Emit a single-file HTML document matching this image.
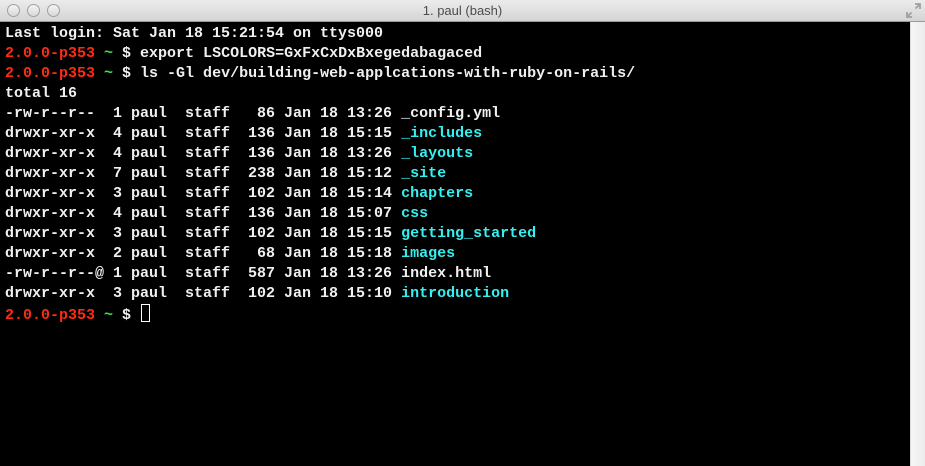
<!DOCTYPE html>
<html><head><style>
html,body{margin:0;padding:0;width:925px;height:466px;overflow:hidden;background:#000}
.tb{position:absolute;left:0;top:0;width:925px;height:22px;background:linear-gradient(#ececec,#d4d4d4);border-bottom:1px solid #9a9a9a;box-sizing:border-box}
.dot{position:absolute;top:4px;width:13px;height:13px;border-radius:50%;background:linear-gradient(#f4f4f4,#d8d8d8);border:1px solid #a0a0a0;box-sizing:border-box}
.title{position:absolute;left:0;right:0;top:3px;text-align:center;font:13px "Liberation Sans",sans-serif;color:#4d4d4d}
.term{position:absolute;left:0;top:22px;width:910px;height:444px;background:#000}
.sb{position:absolute;left:910px;top:22px;width:15px;height:444px;background:linear-gradient(90deg,#f6f6f6,#ececec);border-left:1px solid #ddd;box-sizing:border-box}
pre{margin:0;position:absolute;left:5px;top:2px;font:bold 15px/20px "Liberation Mono",monospace;color:#f0f0f0}
.r{color:#ff2a12}.g{color:#33e633}.c{color:#35f0f0}
.cur{display:inline-block;width:7px;height:16px;border:1px solid #fff;vertical-align:-3px;margin-left:1px}
</style></head><body>
<div class="tb">
<div class="dot" style="left:7px"></div><div class="dot" style="left:27px"></div><div class="dot" style="left:47px"></div>
<div class="title">1. paul (bash)</div>
<svg style="position:absolute;left:906px;top:3px" width="15" height="15" viewBox="0 0 15 15"><path d="M9 1h5v5M14 1L9.5 5.5M6 14H1V9M1 14l4.5-4.5" stroke="#a0a0a0" stroke-width="1.8" fill="none"/></svg>
</div>
<div class="term"><pre>Last login: Sat Jan 18 15:21:54 on ttys000
<span class="r">2.0.0-p353</span> <span class="g">~</span> $ export LSCOLORS=GxFxCxDxBxegedabagaced
<span class="r">2.0.0-p353</span> <span class="g">~</span> $ ls -Gl dev/building-web-applcations-with-ruby-on-rails/
total 16
-rw-r--r--  1 paul  staff   86 Jan 18 13:26 _config.yml
drwxr-xr-x  4 paul  staff  136 Jan 18 15:15 <span class="c">_includes</span>
drwxr-xr-x  4 paul  staff  136 Jan 18 13:26 <span class="c">_layouts</span>
drwxr-xr-x  7 paul  staff  238 Jan 18 15:12 <span class="c">_site</span>
drwxr-xr-x  3 paul  staff  102 Jan 18 15:14 <span class="c">chapters</span>
drwxr-xr-x  4 paul  staff  136 Jan 18 15:07 <span class="c">css</span>
drwxr-xr-x  3 paul  staff  102 Jan 18 15:15 <span class="c">getting_started</span>
drwxr-xr-x  2 paul  staff   68 Jan 18 15:18 <span class="c">images</span>
-rw-r--r--@ 1 paul  staff  587 Jan 18 13:26 index.html
drwxr-xr-x  3 paul  staff  102 Jan 18 15:10 <span class="c">introduction</span>
<span class="r">2.0.0-p353</span> <span class="g">~</span> $ <span class="cur"></span></pre></div>
<div class="sb"></div>
</body></html>
